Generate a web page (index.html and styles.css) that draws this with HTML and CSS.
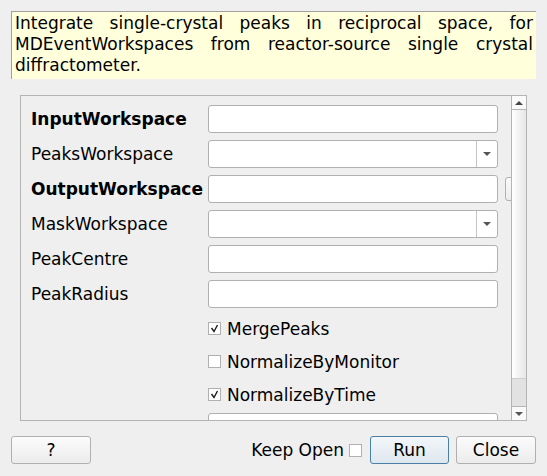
FILE: index.html
```html
<!DOCTYPE html>
<html>
<head>
<meta charset="utf-8">
<link rel="stylesheet" href="styles.css">
</head>
<body>
<div class="window">
  <div class="desc">Integrate single-crystal peaks in reciprocal space, for MDEventWorkspaces from reactor-source single crystal diffractometer.</div>
  <div class="panel">
    <div class="viewport">
      <div class="form">
        <div class="label bold">InputWorkspace</div>
        <div class="field"><div class="input"></div></div>
        <div class="extra"></div>

        <div class="label">PeaksWorkspace</div>
        <div class="field"><div class="input combo"><span class="combo-btn"><span class="tri-down"></span></span></div></div>
        <div class="extra"></div>

        <div class="label bold">OutputWorkspace</div>
        <div class="field"><div class="input"></div></div>
        <div class="extra"><div class="mini-btn"></div></div>

        <div class="label">MaskWorkspace</div>
        <div class="field"><div class="input combo"><span class="combo-btn"><span class="tri-down"></span></span></div></div>
        <div class="extra"></div>

        <div class="label">PeakCentre</div>
        <div class="field"><div class="input"></div></div>
        <div class="extra"></div>

        <div class="label">PeakRadius</div>
        <div class="field"><div class="input"></div></div>
        <div class="extra"></div>
      </div>
      <div class="checks">
        <div class="check-row"><span class="cb"><svg width="11" height="11" viewBox="0 0 11 11"><polyline points="2.5,5 5,8.5 8.5,2" fill="none" stroke="#1a1a1a" stroke-width="1.4"/></svg></span><span>MergePeaks</span></div>
        <div class="check-row"><span class="cb"></span><span>NormalizeByMonitor</span></div>
        <div class="check-row"><span class="cb"><svg width="11" height="11" viewBox="0 0 11 11"><polyline points="2.5,5 5,8.5 8.5,2" fill="none" stroke="#1a1a1a" stroke-width="1.4"/></svg></span><span>NormalizeByTime</span></div>
      </div>
      <div class="form tail">
        <div class="label"></div>
        <div class="field"><div class="input"></div></div>
        <div class="extra"></div>
      </div>
    </div>
    <div class="scrollbar">
      <div class="sb-btn"><span class="tri-up"></span></div>
      <div class="sb-track"><div class="sb-handle"></div></div>
      <div class="sb-btn bottom"><span class="tri-down sb"></span></div>
    </div>
  </div>
  <div class="footer">
    <button class="btn">?</button>
    <div class="spacer"></div>
    <span class="keep">Keep Open</span>
    <span class="cb keep-cb"></span>
    <button class="btn run">Run</button>
    <button class="btn">Close</button>
  </div>
</div>
</body>
</html>
```

FILE: styles.css
```css
html, body {
  margin: 0;
  padding: 0;
  background: #efefef;
}
body {
  font-family: "DejaVu Sans", sans-serif;
  font-size: 17px;
  color: #000;
}
.window {
  width: 547px;
  height: 476px;
  box-sizing: border-box;
  padding: 11px 11px 0 11px;
  display: flex;
  flex-direction: column;
}
.desc {
  height: 68px;
  box-sizing: border-box;
  background: #ffffdc;
  border-top: 1px solid #a0a0a0;
  border-left: 1px solid #a0a0a0;
  padding: 1px 3px 0 3px;
  text-align: justify;
  line-height: 21px;
  font-size: 17px;
}
.panel {
  margin: 16px 9px 0 9px;
  height: 326px;
  box-sizing: border-box;
  border: 1px solid #b4b4b4;
  display: flex;
  overflow: hidden;
}
.viewport {
  flex: 1;
  overflow: hidden;
  padding: 9px 0 0 10px;
}
.form {
  display: grid;
  grid-template-columns: 177px 290px 20px;
  grid-auto-rows: 28px;
  row-gap: 7px;
  align-items: center;
}
.label {
  white-space: nowrap;
}
.bold {
  font-weight: bold;
}
.input {
  height: 28px;
  box-sizing: border-box;
  background: #fff;
  border: 1px solid #b0b0b0;
  border-radius: 3px;
  position: relative;
}
.combo-btn {
  position: absolute;
  right: 0;
  top: 0;
  bottom: 0;
  width: 20px;
  border-left: 1px solid #c4c4c4;
  display: flex;
  align-items: center;
  justify-content: center;
}
.tri-down {
  width: 0;
  height: 0;
  border-left: 4px solid transparent;
  border-right: 4px solid transparent;
  border-top: 4px solid #555;
}
.tri-up {
  width: 0;
  height: 0;
  border-left: 4px solid transparent;
  border-right: 4px solid transparent;
  border-bottom: 4px solid #444;
}
.extra {
  height: 28px;
  padding-left: 7px;
  display: flex;
  align-items: center;
}
.mini-btn {
  width: 16px;
  height: 24px;
  box-sizing: border-box;
  border: 1px solid #b0b0b0;
  border-radius: 3px;
  background: linear-gradient(#fafafa, #ececec);
}
.checks {
  padding: 4px 0 0 177px;
  display: flex;
  flex-direction: column;
}
.check-row {
  height: 33px;
  display: flex;
  align-items: center;
  gap: 6px;
}
.cb {
  width: 13px;
  height: 13px;
  box-sizing: border-box;
  border: 1px solid #b0b0b0;
  background: #fff;
  display: inline-block;
  flex: none;
}
.cb svg {
  display: block;
}
.tail {
  margin-top: 2px;
}
.scrollbar {
  width: 14px;
  border-left: 1px solid #b4b4b4;
  display: flex;
  flex-direction: column;
}
.sb-btn {
  height: 13px;
  border-bottom: 1px solid #b4b4b4;
  background: #fafafa;
  display: flex;
  align-items: center;
  justify-content: center;
}
.sb-btn.bottom {
  border-bottom: none;
  border-top: 1px solid #b4b4b4;
}
.sb-track {
  flex: 1;
  background: linear-gradient(to right, #ffffff, #e6e6e6);
  display: flex;
  flex-direction: column;
  justify-content: flex-end;
}
.sb-handle {
  height: 27px;
  background: #e2e2e2;
  border-top: 1px solid #cfcfcf;
}
.footer {
  margin-top: 15px;
  height: 28px;
  display: flex;
  align-items: center;
}
.spacer {
  flex: 1;
}
.btn {
  width: 80px;
  height: 28px;
  box-sizing: border-box;
  border: 1px solid #b0b0b0;
  border-radius: 3px;
  background: linear-gradient(#fbfbfb, #ececec);
  font-family: "DejaVu Sans", sans-serif;
  font-size: 17px;
  color: #000;
  padding: 0;
}
.btn.run {
  width: 79px;
  border-color: #4a7fa8;
  background: linear-gradient(#f2f6f9, #dfe7ee);
  margin-right: 7px;
}
.keep {
  margin-right: 5px;
}
.keep-cb {
  margin-right: 8px;
}
```
